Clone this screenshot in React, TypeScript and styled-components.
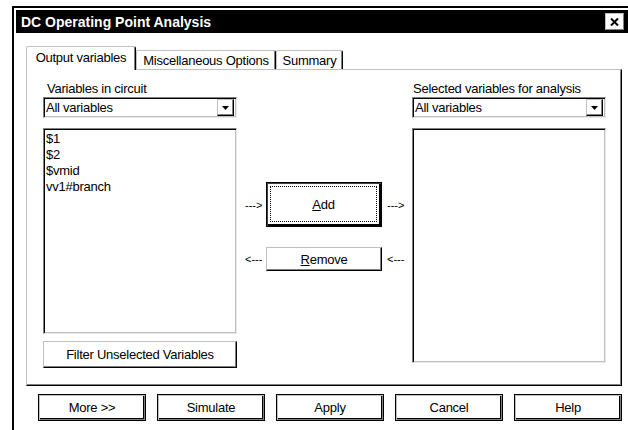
import React from "react";
import styled, { createGlobalStyle } from "styled-components";

const LIGHT = "#c0c0c0";
const SHADOW = "#808080";

const Global = createGlobalStyle`
  html, body {
    margin: 0;
    padding: 0;
    background: #fff;
    width: 628px;
    height: 430px;
    overflow: hidden;
  }
  body {
    font-family: "Liberation Sans", Arial, sans-serif;
    font-size: 13px;
    letter-spacing: -0.25px;
    color: #000;
  }
`;

const Window = styled.div`
  margin: 6px 0 0 12px;
  width: 620px;
  height: 440px;
  box-sizing: border-box;
  border: 2px solid #000;
  padding: 2px;
  background: #fff;
`;

const TitleBar = styled.div`
  height: 23px;
  background: #000;
  display: flex;
  align-items: center;
  justify-content: space-between;
  padding: 0 4px 0 5px;
`;

const Title = styled.span`
  color: #fff;
  font-weight: bold;
  font-size: 14px;
  letter-spacing: 0;
`;

const CloseButton = styled.div`
  width: 19px;
  height: 17px;
  box-sizing: border-box;
  background: #fff;
  border: 1px solid ${LIGHT};
  border-right-color: ${SHADOW};
  border-bottom-color: ${SHADOW};
  display: flex;
  align-items: center;
  justify-content: center;
`;

const Body = styled.div`
  padding: 13px 6px 0 10px;
`;

const TabStrip = styled.div`
  display: flex;
  align-items: flex-end;
  height: 23px;
  position: relative;
  z-index: 1;
`;

const Tab = styled.div<{ $w: number; $active?: boolean }>`
  width: ${(p) => p.$w}px;
  height: ${(p) => (p.$active ? 24 : 19)}px;
  margin-bottom: ${(p) => (p.$active ? -1 : 0)}px;
  box-sizing: border-box;
  background: #fff;
  border-top: 1px solid ${LIGHT};
  border-left: 1px solid ${LIGHT};
  border-right: 1px solid #000;
  border-radius: 2px 2px 0 0;
  box-shadow: inset -1px 0 0 ${SHADOW};
  text-align: center;
  line-height: 15px;
  padding-top: ${(p) => (p.$active ? 3 : 2)}px;
  white-space: nowrap;
`;

const Panel = styled.div`
  width: 596px;
  box-sizing: border-box;
  border-top: 1px solid ${LIGHT};
  border-left: 1px solid ${LIGHT};
  border-right: 1px solid #000;
  border-bottom: 1px solid #000;
  box-shadow: inset -1px -1px 0 ${SHADOW};
  padding: 11px 15px 17px 16px;
  display: grid;
  grid-template-columns: 194px 1fr 194px;
  align-items: start;
`;

const Column = styled.div`
  display: flex;
  flex-direction: column;
`;

const Label = styled.div<{ $indent?: number }>`
  line-height: 15px;
  height: 15px;
  margin-bottom: 1px;
  padding-left: ${(p) => p.$indent ?? 4}px;
  white-space: nowrap;
`;

const Combo = styled.div`
  height: 21px;
  box-sizing: border-box;
  border-top: 1px solid ${SHADOW};
  border-left: 1px solid ${SHADOW};
  border-right: 1px solid #e8e8e8;
  border-bottom: 1px solid #e8e8e8;
  box-shadow: inset 1px 1px 0 #000, inset -1px -1px 0 ${LIGHT};
  display: flex;
  align-items: center;
  justify-content: space-between;
  padding: 2px;
  background: #fff;
`;

const ComboText = styled.span`
  padding-left: 0;
  line-height: 15px;
`;

const ComboArrow = styled.div`
  width: 17px;
  height: 17px;
  box-sizing: border-box;
  border-top: 1px solid ${LIGHT};
  border-left: 1px solid ${LIGHT};
  border-right: 1px solid #000;
  border-bottom: 1px solid #000;
  box-shadow: inset -1px -1px 0 ${SHADOW};
  display: flex;
  align-items: center;
  justify-content: center;
`;

const ListBox = styled.div<{ $h: number }>`
  margin-top: 10px;
  height: ${(p) => p.$h}px;
  box-sizing: border-box;
  border-top: 1px solid ${SHADOW};
  border-left: 1px solid ${SHADOW};
  border-right: 1px solid #e8e8e8;
  border-bottom: 1px solid #e8e8e8;
  box-shadow: inset 1px 1px 0 #000, inset -1px -1px 0 ${LIGHT};
  padding: 2px 2px;
  background: #fff;
`;

const ListItem = styled.div`
  line-height: 16px;
  height: 16px;
  white-space: nowrap;
`;

const RaisedButton = styled.div<{ $h: number; $w?: number; $mt?: number }>`
  height: ${(p) => p.$h}px;
  ${(p) => (p.$w ? `width: ${p.$w}px;` : "")}
  margin-top: ${(p) => p.$mt ?? 0}px;
  box-sizing: border-box;
  background: #fff;
  border-top: 1px solid ${LIGHT};
  border-left: 1px solid ${LIGHT};
  border-right: 1px solid #000;
  border-bottom: 1px solid #000;
  box-shadow: inset -1px -1px 0 ${SHADOW};
  display: flex;
  align-items: center;
  justify-content: center;
  white-space: nowrap;
`;

const DefaultButton = styled.div`
  width: 116px;
  height: 45px;
  box-sizing: border-box;
  background: #fff;
  border: 1px solid #000;
  box-shadow: inset 1px 1px 0 #404040, inset -2px -2px 0 #000;
  padding: 3px 4px 4px 3px;
  display: flex;
`;

const FocusRing = styled.div`
  flex: 1;
  border: 1px dotted #000;
  display: flex;
  align-items: center;
  justify-content: center;
`;

const Middle = styled.div`
  display: flex;
  flex-direction: column;
  align-items: center;
  padding-top: 101px;
  gap: 20px;
`;

const TransferRow = styled.div`
  display: flex;
  align-items: center;
`;

const Arrow = styled.span<{ $side: "l" | "r" }>`
  font-size: 11px;
  letter-spacing: 0;
  width: 17px;
  margin-right: ${(p) => (p.$side === "l" ? 4 : 0)}px;
  margin-left: ${(p) => (p.$side === "r" ? 5 : 0)}px;
  white-space: nowrap;
`;

const ButtonRow = styled.div`
  display: flex;
  gap: 11px;
  margin-top: 8px;
  padding-left: 12px;
`;

const FooterButton = styled.div`
  width: 108px;
  height: 27px;
  box-sizing: border-box;
  background: #fff;
  border: 1px solid #000;
  box-shadow: inset 1px 1px 0 ${LIGHT}, inset -1px -1px 0 ${SHADOW}, inset -2px -2px 0 #000;
  display: flex;
  align-items: center;
  justify-content: center;
  white-space: nowrap;
`;

const DownTriangle = () => (
  <svg width="7" height="4" viewBox="0 0 7 4">
    <path d="M0 0 H7 L3.5 4 Z" fill="#000" />
  </svg>
);

const CloseX = () => (
  <svg width="9" height="8" viewBox="0 0 9 8">
    <path d="M1 0.5 L8 7.5 M8 0.5 L1 7.5" stroke="#000" strokeWidth="2" />
  </svg>
);

const Dropdown = ({ value }: { value: string }) => (
  <Combo>
    <ComboText>{value}</ComboText>
    <ComboArrow>
      <DownTriangle />
    </ComboArrow>
  </Combo>
);

const variables = ["$1", "$2", "$vmid", "vv1#branch"];

export default function App() {
  return (
    <>
      <Global />
      <Window>
        <TitleBar>
          <Title>DC Operating Point Analysis</Title>
          <CloseButton>
            <CloseX />
          </CloseButton>
        </TitleBar>
        <Body>
          <TabStrip>
            <Tab $w={110} $active>
              Output variables
            </Tab>
            <Tab $w={140}>Miscellaneous Options</Tab>
            <Tab $w={67}>Summary</Tab>
          </TabStrip>
          <Panel>
            <Column>
              <Label>Variables in circuit</Label>
              <Dropdown value="All variables" />
              <ListBox $h={206}>
                {variables.map((v) => (
                  <ListItem key={v}>{v}</ListItem>
                ))}
              </ListBox>
              <RaisedButton $h={27} $mt={7}>
                Filter Unselected Variables
              </RaisedButton>
            </Column>
            <Middle>
              <TransferRow>
                <Arrow $side="l">---&gt;</Arrow>
                <DefaultButton>
                  <FocusRing>
                    <span>
                      <u>A</u>dd
                    </span>
                  </FocusRing>
                </DefaultButton>
                <Arrow $side="r">---&gt;</Arrow>
              </TransferRow>
              <TransferRow>
                <Arrow $side="l">&lt;---</Arrow>
                <RaisedButton $h={24} $w={116}>
                  <span>
                    <u>R</u>emove
                  </span>
                </RaisedButton>
                <Arrow $side="r">&lt;---</Arrow>
              </TransferRow>
            </Middle>
            <Column>
              <Label $indent={1}>Selected variables for analysis</Label>
              <Dropdown value="All variables" />
              <ListBox $h={235} />
            </Column>
          </Panel>
          <ButtonRow>
            <FooterButton>More &gt;&gt;</FooterButton>
            <FooterButton>Simulate</FooterButton>
            <FooterButton>Apply</FooterButton>
            <FooterButton>Cancel</FooterButton>
            <FooterButton>Help</FooterButton>
          </ButtonRow>
        </Body>
      </Window>
    </>
  );
}
